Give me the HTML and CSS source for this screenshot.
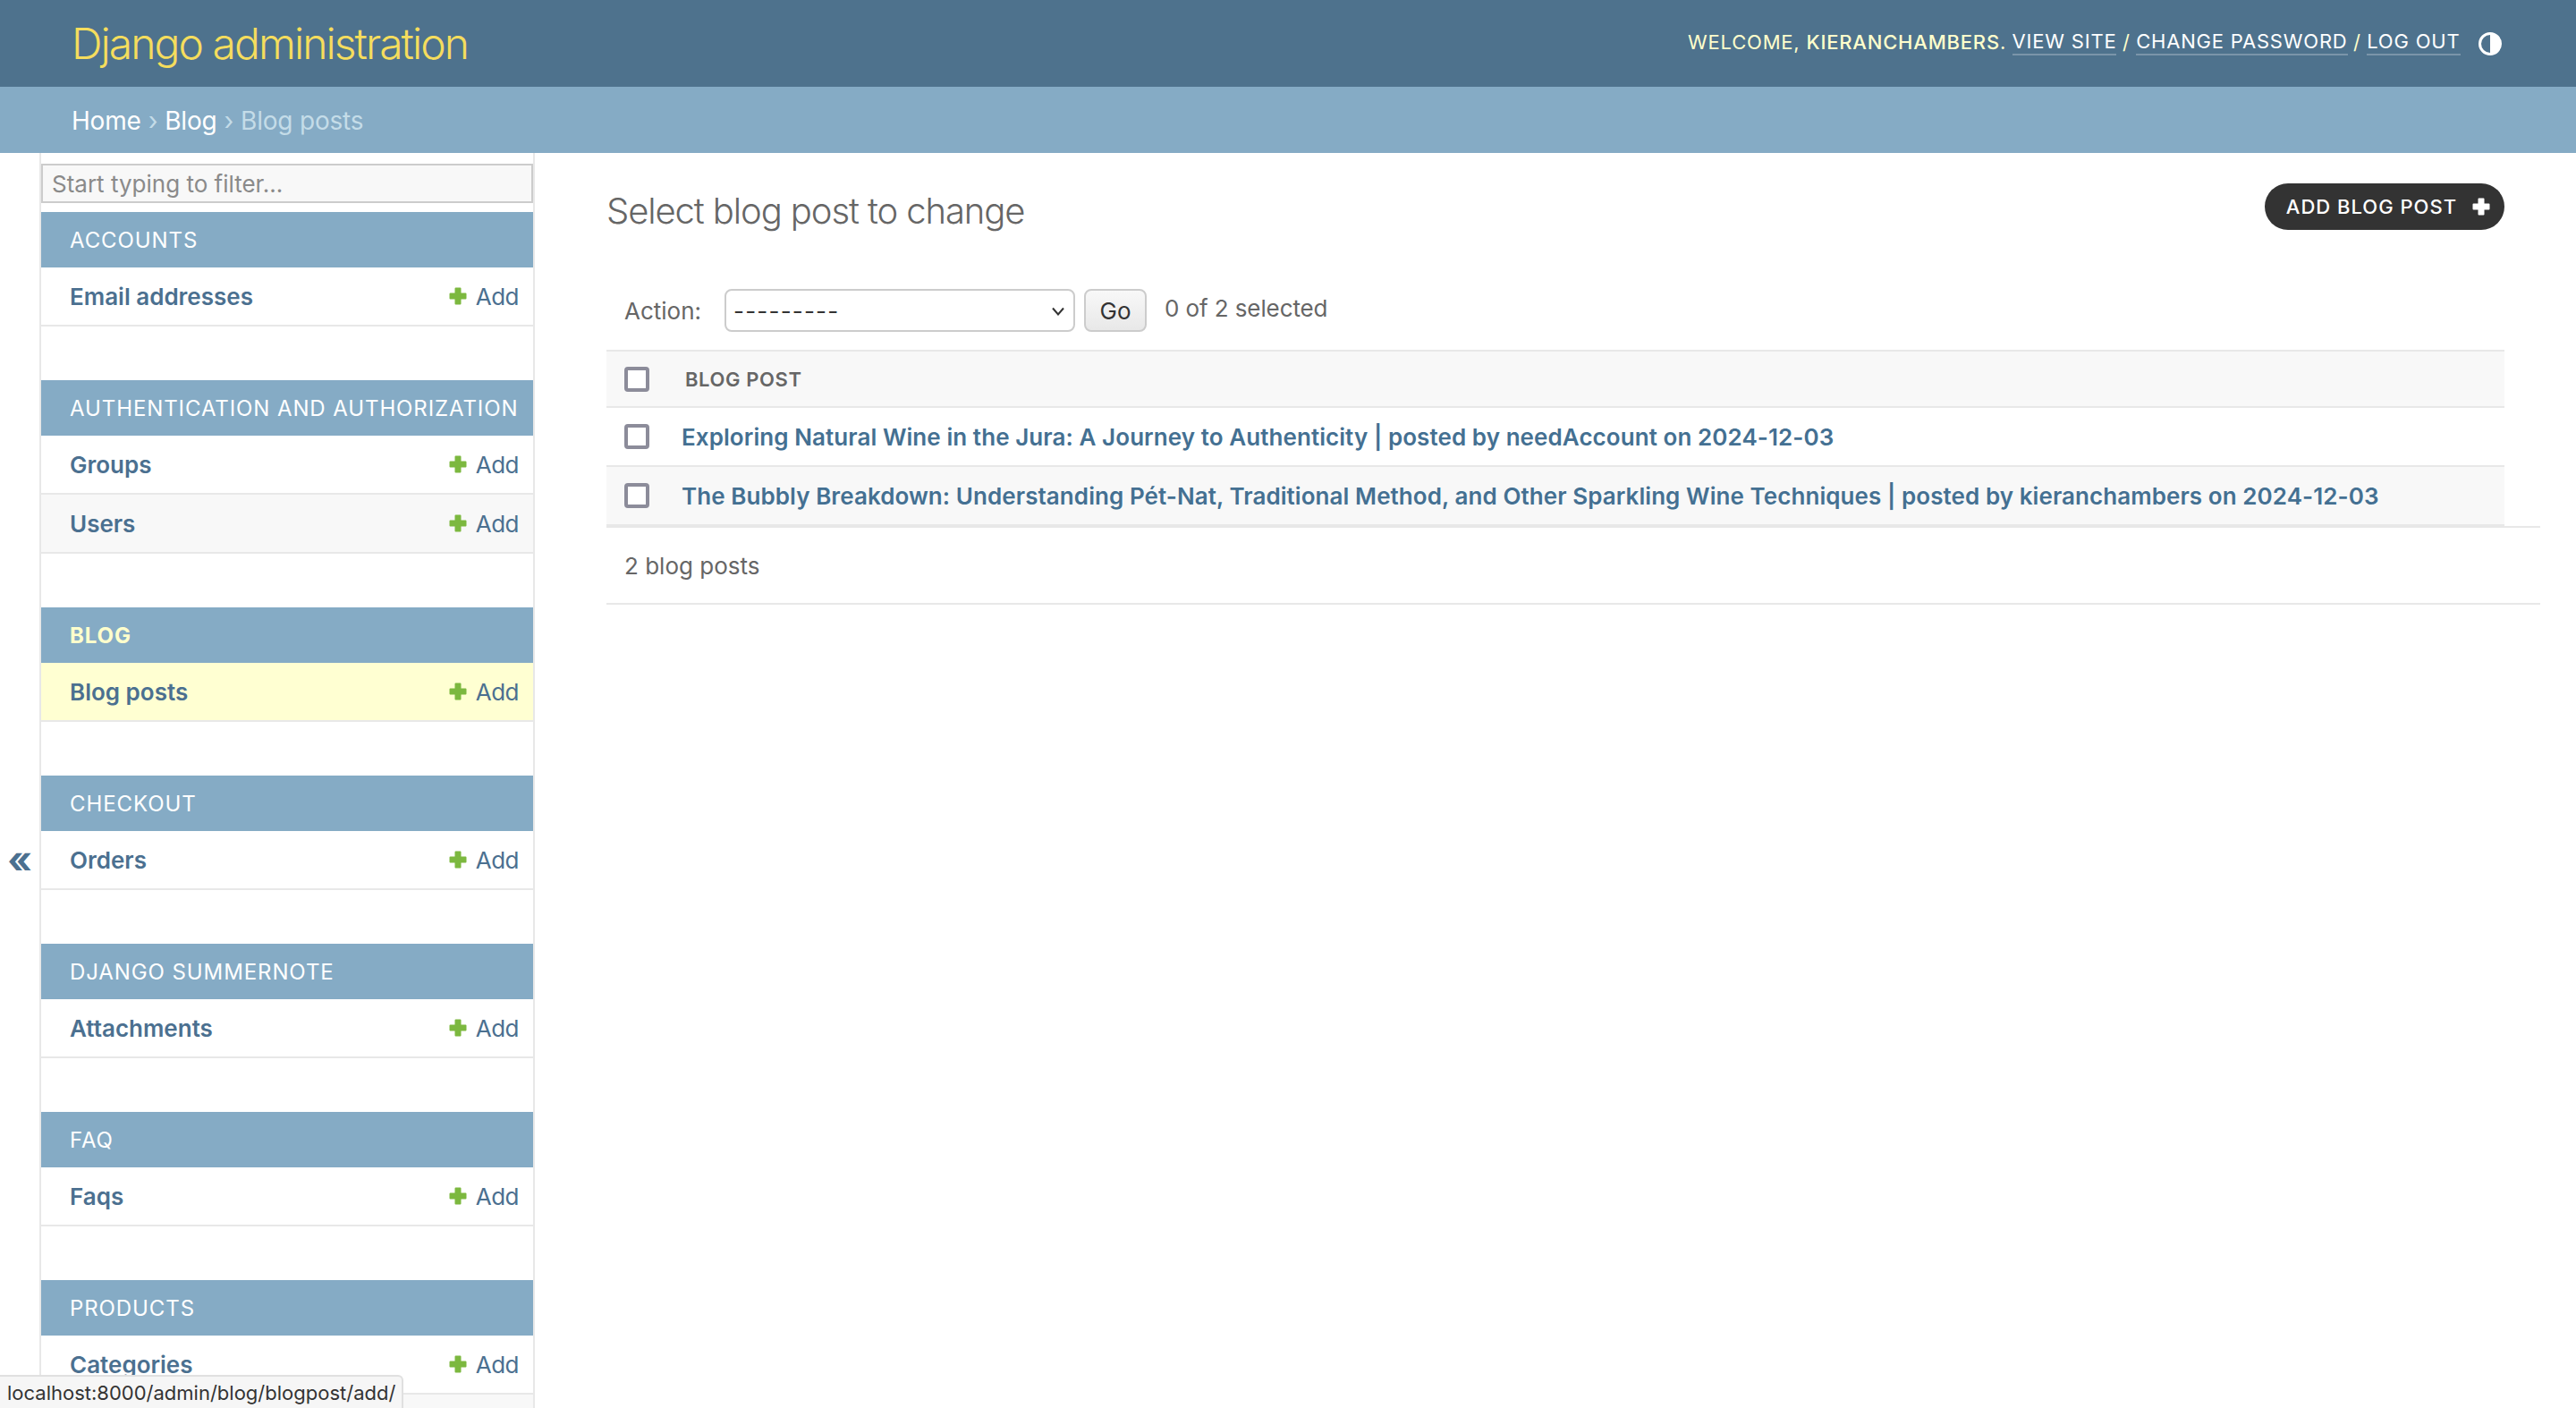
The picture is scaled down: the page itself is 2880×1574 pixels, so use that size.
FILE: index.html
```html
<!DOCTYPE html>
<html lang="en">
<head>
<meta charset="utf-8">
<title>Select blog post to change | Django site admin</title>
<link rel="stylesheet" href="styles.css">
</head>
<body>
<svg class="defs" width="0" height="0" aria-hidden="true"><defs>
<symbol id="plus" viewBox="0 0 20 20"><path d="M6.5 1.5a1 1 0 0 1 1-1h5a1 1 0 0 1 1 1v5h5a1 1 0 0 1 1 1v5a1 1 0 0 1-1 1h-5v5a1 1 0 0 1-1 1h-5a1 1 0 0 1-1-1v-5h-5a1 1 0 0 1-1-1v-5a1 1 0 0 1 1-1h5z" fill="currentColor"/></symbol>
</defs></svg>
<header class="header">
  <h1 class="brand"><a href="#">Django administration</a></h1>
  <div class="tools">
    <span>Welcome, <strong>kieranchambers</strong>.</span>
    <a href="#">View site</a> <span>/</span> <a href="#">Change password</a> <span>/</span> <a href="#">Log out</a>
    <svg class="theme" width="26" height="26" viewBox="0 0 26 26" aria-hidden="true"><circle cx="13" cy="13" r="11.5" fill="none" stroke="#fff" stroke-width="3"/><path d="M13 2a11 11 0 0 1 0 22z" fill="#fff"/></svg>
  </div>
</header>
<nav class="crumbs"><a href="#">Home</a> <span class="sep">›</span> <a href="#">Blog</a> <span class="sep">›</span> <span class="cur">Blog posts</span></nav>
<div class="main">
  <button class="toggle" type="button">«</button>
  <aside class="side">
    <input class="filter" type="search" placeholder="Start typing to filter...">
    <section class="app"><h2>Accounts</h2>
      <div class="row"><a href="#">Email addresses</a><a class="add" href="#"><svg width="20" height="20"><use href="#plus"/></svg>Add</a></div></section>
    <section class="app"><h2>Authentication and Authorization</h2>
      <div class="row"><a href="#">Groups</a><a class="add" href="#"><svg width="20" height="20"><use href="#plus"/></svg>Add</a></div>
      <div class="row alt"><a href="#">Users</a><a class="add" href="#"><svg width="20" height="20"><use href="#plus"/></svg>Add</a></div></section>
    <section class="app"><h2 class="on">Blog</h2>
      <div class="row hl"><a href="#">Blog posts</a><a class="add" href="#"><svg width="20" height="20"><use href="#plus"/></svg>Add</a></div></section>
    <section class="app"><h2>Checkout</h2>
      <div class="row"><a href="#">Orders</a><a class="add" href="#"><svg width="20" height="20"><use href="#plus"/></svg>Add</a></div></section>
    <section class="app"><h2>Django Summernote</h2>
      <div class="row"><a href="#">Attachments</a><a class="add" href="#"><svg width="20" height="20"><use href="#plus"/></svg>Add</a></div></section>
    <section class="app"><h2>FAQ</h2>
      <div class="row"><a href="#">Faqs</a><a class="add" href="#"><svg width="20" height="20"><use href="#plus"/></svg>Add</a></div></section>
    <section class="app"><h2>Products</h2>
      <div class="row"><a href="#">Categories</a><a class="add" href="#"><svg width="20" height="20"><use href="#plus"/></svg>Add</a></div>
      <div class="row alt"></div></section>
  </aside>
  <main class="content">
    <div class="title-row">
      <h1 class="title">Select blog post to change</h1>
      <a class="addbtn" href="#">Add blog post<svg width="20" height="20"><use href="#plus"/></svg></a>
    </div>
    <div class="changelist">
      <form class="actions">
        <label class="action-label">Action:</label>
        <span class="selectwrap"><select class="select"><option>---------</option></select>
          <svg class="chev" width="16" height="10" viewBox="0 0 16 10" aria-hidden="true"><path d="M2 1.5l6 7 6-7" fill="none" stroke="#333" stroke-width="2"/></svg></span>
        <button class="go" type="button">Go</button>
        <span class="count">0 of 2 selected</span>
      </form>
      <div class="table">
        <div class="thead"><span class="cbx"></span><span class="th">Blog post</span></div>
        <div class="tr"><span class="cbx"></span><a href="#">Exploring Natural Wine in the Jura: A Journey to Authenticity | posted by needAccount on 2024-12-03</a></div>
        <div class="tr alt"><span class="cbx"></span><a href="#">The Bubbly Breakdown: Understanding Pét-Nat, Traditional Method, and Other Sparkling Wine Techniques | posted by kieranchambers on 2024-12-03</a></div>
      </div>
      <p class="paginator">2 blog posts</p>
    </div>
  </main>
</div>
<div class="status">localhost:8000/admin/blog/blogpost/add/</div>
</body>
</html>
```
FILE: styles.css
```css
* { box-sizing: border-box; }
html, body { height: 100%; }
body {
  margin: 0;
  overflow: hidden;
  background: #fff;
  color: #333;
  font-family: Inter, "Liberation Sans", sans-serif;
  font-size: 28px;
  display: flex;
  flex-direction: column;
}
a { text-decoration: none; color: inherit; }
.defs { position: absolute; }

.header {
  flex: none;
  height: 97px;
  padding: 0 83px 0 80px;
  background: #4e728d;
  display: flex;
  align-items: center;
  justify-content: space-between;
}
.brand { margin: 0; font-size: 48px; font-weight: 300; color: #f5dd5d; letter-spacing: -1.95px; }
.tools {
  display: flex;
  align-items: center;
  gap: 6.5px;
  font-size: 22px;
  letter-spacing: .8px;
  text-transform: uppercase;
  color: #ffc;
  margin-bottom: 3px;
}
.tools strong { font-weight: 500; }
.tools a { color: #fff; border-bottom: 2px solid rgba(255,255,255,.25); line-height: 28px; }
.theme { margin-left: 14px; margin-top: 3px; }

.crumbs {
  flex: none;
  height: 74px;
  padding: 1px 80px 0;
  background: #85abc5;
  color: #c4dce8;
  font-size: 28px;
  letter-spacing: -.2px;
  display: flex;
  align-items: center;
  gap: 8px;
}
.crumbs a { color: #fff; }
.crumbs .sep { color: #c4dce8; }

.main { flex: 1; min-height: 0; display: flex; }
.toggle {
  flex: none;
  width: 44px;
  padding: 175px 0 0;
  border: 0;
  background: #fff;
  color: #4b7090;
  font: 700 42px Inter, sans-serif;
}
.side {
  flex: none;
  width: 554px;
  padding-top: 12px;
  border-left: 2px solid #e8e8e8;
  border-right: 2px solid #e8e8e8;
  overflow: hidden;
}
.filter {
  display: block;
  width: 100%;
  height: 44px;
  margin-bottom: 10px;
  padding: 0 10px;
  border: 2px solid #ccc;
  border-radius: 0;
  background: #f8f8f8;
  color: #333;
  font: 26px Inter, sans-serif;
  outline: 0;
}
.filter::placeholder { color: #8a8a8a; }
.app { margin-bottom: 60px; }
.app h2 {
  margin: 0;
  height: 62px;
  padding: 1px 32px 0;
  background: #85abc5;
  color: #fff;
  font-size: 24px;
  font-weight: 400;
  letter-spacing: .9px;
  line-height: 62px;
  text-transform: uppercase;
  white-space: nowrap;
}
.app h2.on { color: #ffc; font-weight: 700; }
.row {
  height: 66px;
  padding: 0 16px 0 32px;
  border-bottom: 2px solid #e8e8e8;
  display: flex;
  align-items: center;
  justify-content: space-between;
  color: #4b7090;
  font-size: 26px;
  font-weight: 600;
}
.row.alt { background: #f8f8f8; }
.row.hl { background: #ffffd2; }
.add { display: flex; align-items: center; gap: 10px; font-weight: 400; letter-spacing: -.5px; }
.add svg { color: #7cb83f; }

.content { flex: 1; min-width: 0; padding: 0 40px 0 80px; }
.title-row {
  display: flex;
  justify-content: space-between;
  align-items: flex-start;
  padding: 34px 40px 0 0;
  height: 152px;
}
.title { margin: 0; padding-top: 7px; font-size: 40px; font-weight: 300; letter-spacing: -1.1px; color: #666; line-height: 48px; }
.addbtn {
  display: flex;
  align-items: center;
  gap: 17px;
  height: 52px;
  padding: 0 16px 0 24px;
  border-radius: 26px;
  background: #333;
  color: #fff;
  font-size: 22px;
  font-weight: 500;
  letter-spacing: 1px;
  text-transform: uppercase;
}
.actions {
  display: flex;
  align-items: center;
  height: 48px;
  padding-left: 20px;
  font-size: 26px;
  color: #666;
}
.action-label { width: 112px; }
.selectwrap { position: relative; display: block; width: 392px; height: 48px; }
.select {
  appearance: none;
  width: 100%;
  height: 100%;
  padding: 0 8px;
  border: 2px solid #ccc;
  border-radius: 8px;
  background: #fff;
  color: #333;
  font: 26px Inter, sans-serif;
  letter-spacing: 1.2px;
}
.chev { position: absolute; right: 11px; top: 20px; }
.go {
  width: 70px;
  height: 48px;
  margin-left: 10px;
  padding: 0;
  border: 2px solid #ccc;
  border-radius: 8px;
  background: linear-gradient(#f8f8f8, #e8e8e8);
  color: #333;
  font: 26px Inter, sans-serif;
}
.count { margin: -5px 0 0 20px; color: #666; letter-spacing: -.1px; }
.table { margin: 20px 40px 0 0; border-top: 2px solid #e8e8e8; }
.thead, .tr {
  display: flex;
  align-items: center;
  padding-left: 20px;
  border-bottom: 2px solid #e8e8e8;
}
.thead { height: 63px; background: #f8f8f8; }
.tr { height: 66px; color: #447092; font-size: 26px; font-weight: 600; letter-spacing: .07px; }
.tr.alt { background: #f8f8f8; }
.cbx {
  flex: none;
  width: 28px;
  height: 28px;
  margin-right: 40px;
  border: 4px solid #8c8c9a;
  border-radius: 4px;
  background: #fff;
}
.tr .cbx { margin-right: 36px; }
.th { font-size: 22px; font-weight: 600; letter-spacing: .6px; color: #666; text-transform: uppercase; }
.paginator {
  margin: 0;
  height: 88px;
  padding: 0 0 0 20px;
  border-top: 2px solid #e8e8e8;
  border-bottom: 2px solid #e8e8e8;
  font-size: 26px;
  color: #666;
  line-height: 85px;
}
.status {
  position: fixed;
  left: 0;
  bottom: 0;
  width: 451px;
  height: 37px;
  padding: 0 8px;
  border: 2px solid #e0e0e0;
  border-left: 0;
  border-bottom: 0;
  border-top-right-radius: 6px;
  background: #f6f6f6;
  color: #333;
  font-size: 22px;
  line-height: 36px;
  white-space: nowrap;
}
```
